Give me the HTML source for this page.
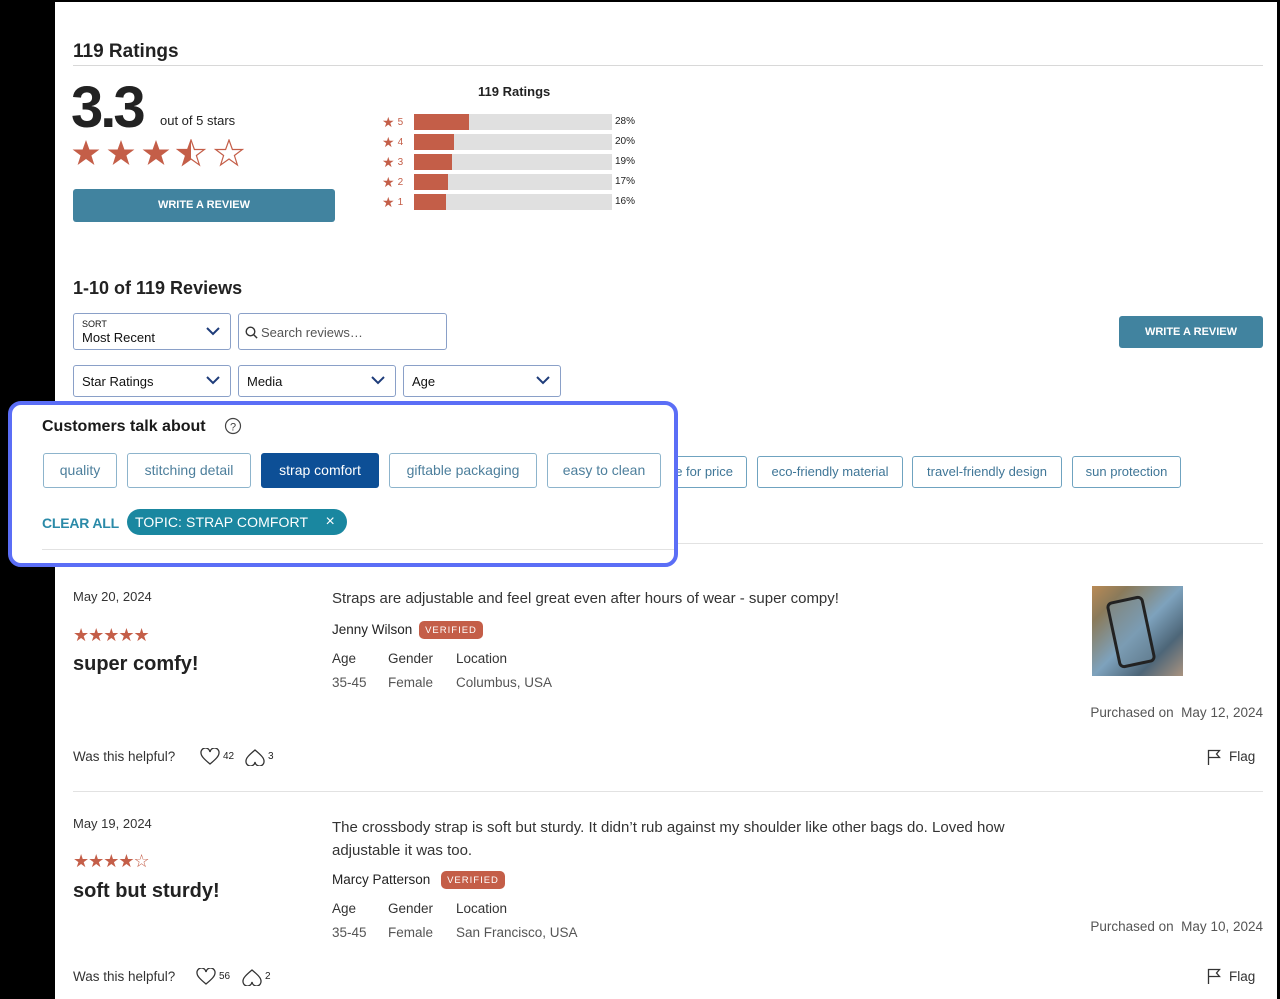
<!DOCTYPE html>
<html><head><meta charset="utf-8"><style>
*{box-sizing:border-box;margin:0;padding:0}
body{width:1280px;height:999px;background:#000;position:relative;overflow:hidden;font-family:"Liberation Sans",Arial,sans-serif;color:#222}
.page{position:absolute;left:55px;top:2px;width:1222px;height:997px;background:#fff}
.a{position:absolute;white-space:nowrap}
.sel{position:absolute;border:1px solid #8aa0c8;border-radius:3px;background:#fff;font-size:13px;color:#111}
.chev{position:absolute;right:10px;top:50%;margin-top:-5px}
.chip{position:absolute;top:456px;height:32px;border:1px solid #6fa3c0;border-radius:3px;color:#3f7697;font-size:13px;line-height:30px;text-align:center;background:#fff}
.chip2{position:absolute;top:453px;height:35px;border:1.5px solid #8db4cc;border-radius:3px;color:#4d7f9c;font-size:14px;line-height:32px;text-align:center;background:#fff}
.btn{position:absolute;background:#41839f;color:#fff;font-weight:bold;font-size:11px;text-align:center;border-radius:3px}
.rv{font-family:"Liberation Sans",sans-serif;color:#333}
.badge{position:absolute;background:#c45e48;color:#fff;font-size:9.5px;letter-spacing:1px;border-radius:5px;height:18px;display:flex;align-items:center;justify-content:center}
.hr{position:absolute;height:1px;background:#e2e2e2}
.hs{position:absolute;left:382px;font-size:14px;color:#c45e48;line-height:14px}
.hs span{font-size:10px;margin-left:3px;vertical-align:2px}
.hp{position:absolute;left:615px;font-size:10px;color:#222}
</style></head><body>
<div class="page"></div>
<div class="a" style="left:73px;top:41px;font-size:19px;font-weight:bold;color:#222">119 Ratings</div>
<div class="hr" style="left:73px;top:65px;width:1190px;background:#d8d8d8"></div>
<div class="a" style="left:71px;top:74px;font-size:58px;font-weight:bold;letter-spacing:-3px;color:#222">3.3</div>
<div class="a" style="left:160px;top:113px;font-size:13px;color:#222">out of 5 stars</div>
<svg class="a" style="left:72px;top:139px" width="175" height="30" viewBox="0 0 175 30">
<defs><path id="s" d="M14 1l3.4 9.5h10l-8 6 3 9.5-8.4-6-8.4 6 3-9.5-8-6h10z"/>
<clipPath id="h"><rect x="0" y="0" width="14" height="30"/></clipPath></defs>
<g fill="#c45e48"><use href="#s"/><use href="#s" x="35"/><use href="#s" x="70"/></g>
<g transform="translate(105,0)"><use href="#s" fill="#c45e48" clip-path="url(#h)"/><use href="#s" fill="none" stroke="#c45e48" stroke-width="1.2"/></g>
<use href="#s" x="143" fill="none" stroke="#c45e48" stroke-width="1.2"/>
</svg>
<div class="btn" style="left:73px;top:189px;width:262px;height:33px;line-height:33px">WRITE A REVIEW</div>
<div class="a" style="left:478px;top:84px;font-size:13px;font-weight:bold">119 Ratings</div>
<div class="a" style="left:73px;top:278px;font-size:18px;font-weight:bold;color:#222">1-10 of 119 Reviews</div>
<div class="sel" style="left:73px;top:313px;width:158px;height:37px"><div class="a" style="left:8px;top:5px;font-size:9px">SORT</div><div class="a" style="left:8px;top:16px">Most Recent</div><svg class="chev" width="14" height="9"><path d="M1 1l6 6 6-6" stroke="#1e3c7a" stroke-width="2" fill="none"/></svg></div>
<div class="sel" style="left:238px;top:313px;width:209px;height:37px"><svg class="a" style="left:6px;top:12px" width="13" height="13"><circle cx="5.5" cy="5.5" r="4.3" stroke="#333" stroke-width="1.4" fill="none"/><path d="M8.6 8.6l3.5 3.5" stroke="#333" stroke-width="1.5"/></svg><div class="a" style="left:22px;top:11px;color:#555">Search reviews…</div></div>
<div class="btn" style="left:1119px;top:316px;width:144px;height:32px;line-height:32px">WRITE A REVIEW</div>
<div class="sel" style="left:73px;top:365px;width:158px;height:32px"><div class="a" style="left:8px;top:8px">Star Ratings</div><svg class="chev" width="14" height="9"><path d="M1 1l6 6 6-6" stroke="#1e3c7a" stroke-width="2" fill="none"/></svg></div>
<div class="sel" style="left:238px;top:365px;width:158px;height:32px"><div class="a" style="left:8px;top:8px">Media</div><svg class="chev" width="14" height="9"><path d="M1 1l6 6 6-6" stroke="#1e3c7a" stroke-width="2" fill="none"/></svg></div>
<div class="sel" style="left:403px;top:365px;width:158px;height:32px"><div class="a" style="left:8px;top:8px">Age</div><svg class="chev" width="14" height="9"><path d="M1 1l6 6 6-6" stroke="#1e3c7a" stroke-width="2" fill="none"/></svg></div>
<div class="chip" style="left:600px;width:147px;text-align:right;padding-right:13px">value for price</div>
<div class="chip" style="left:757px;width:146px">eco-friendly material</div>
<div class="chip" style="left:912px;width:150px">travel-friendly design</div>
<div class="chip" style="left:1072px;width:109px">sun protection</div>
<div class="hr" style="left:677px;top:543px;width:586px"></div>
<!-- overlay -->
<div class="a" style="left:8px;top:401px;width:670px;height:166px;border:4px solid #5b6ef6;border-radius:13px;background:#fff;overflow:hidden">
<div class="a" style="left:30px;top:13px;font-size:16px;font-weight:bold;color:#1a1a1a">Customers talk about</div>
<svg class="a" style="left:212px;top:12px" width="18" height="18"><circle cx="9" cy="9" r="7.5" stroke="#444" stroke-width="1.2" fill="none"/><text x="9" y="13.5" font-size="11" text-anchor="middle" fill="#444" font-family="Liberation Sans">?</text></svg>
<div class="chip2" style="left:31px;top:48px;width:74px">quality</div>
<div class="chip2" style="left:115px;top:48px;width:124px">stitching detail</div>
<div class="chip2" style="left:249px;top:48px;width:118px;background:#0d4f96;border-color:#0d4f96;color:#fff">strap comfort</div>
<div class="chip2" style="left:377px;top:48px;width:148px">giftable packaging</div>
<div class="chip2" style="left:535px;top:48px;width:114px">easy to clean</div>
<div class="a" style="left:30px;top:110px;font-size:14px;color:#2a8aa8;font-weight:bold;letter-spacing:-.2px">CLEAR ALL</div>
<div class="a" style="left:115px;top:104px;width:220px;height:26px;border-radius:13px;background:#1a87a0;color:#fff;font-size:14px;line-height:26px;padding-left:8px;letter-spacing:.1px">TOPIC: STRAP COMFORT<span style="position:absolute;right:12px;font-size:16px">×</span></div>
<div class="hr" style="left:30px;top:144px;width:640px"></div>
</div>
<!-- review 1 -->
<div class="a rv" style="left:73px;top:589px;font-size:13px">May 20, 2024</div>
<div class="a" style="left:73px;top:625px;font-size:18px;color:#c45e48;letter-spacing:-1px">★★★★★</div>
<div class="a" style="left:73px;top:653px;font-size:20px;font-weight:bold;color:#222">super comfy!</div>
<div class="a rv" style="left:332px;top:590px;font-size:15px">Straps are adjustable and feel great even after hours of wear - super compy!</div>
<div class="a rv" style="left:332px;top:622px;font-size:13.5px;color:#222">Jenny Wilson</div>
<div class="badge" style="left:419px;top:621px;width:64px">VERIFIED</div>
<div class="a rv" style="left:332px;top:651px;font-size:13.5px">Age</div>
<div class="a rv" style="left:388px;top:651px;font-size:13.5px">Gender</div>
<div class="a rv" style="left:456px;top:651px;font-size:13.5px">Location</div>
<div class="a rv" style="left:332px;top:675px;font-size:13.5px;color:#555">35-45</div>
<div class="a rv" style="left:388px;top:675px;font-size:13.5px;color:#555">Female</div>
<div class="a rv" style="left:456px;top:675px;font-size:13.5px;color:#555">Columbus, USA</div>
<div class="a" style="left:1092px;top:586px;width:91px;height:90px;overflow:hidden;background:linear-gradient(135deg,#b98a55 0%,#8a7a5a 20%,#7ea2bd 50%,#4d6678 75%,#a99380 100%)"><div class="a" style="left:20px;top:12px;width:38px;height:68px;border:3px solid #222;border-radius:6px;transform:rotate(-12deg);background:rgba(120,150,170,.5)"></div></div>
<div class="a rv" style="right:17px;top:705px;font-size:13.5px;color:#555">Purchased on&nbsp; May 12, 2024</div>
<div class="a rv" style="left:73px;top:749px;font-size:13.5px">Was this helpful?</div>
<svg class="a" style="left:200px;top:748px" width="20" height="18"><path d="M10 16C4 11 1 8 1 5a4 4 0 0 1 9-1 4 4 0 0 1 9 1c0 3-3 6-9 11z" fill="none" stroke="#333" stroke-width="1.3"/></svg>
<div class="a" style="left:223px;top:751px;font-size:10px">42</div>
<svg class="a" style="left:245px;top:748px" width="20" height="18"><path d="M10 2C4 7 1 10 1 13a4 4 0 0 0 9 1 4 4 0 0 0 9-1c0-3-3-6-9-11z" fill="none" stroke="#333" stroke-width="1.3"/></svg>
<div class="a" style="left:268px;top:751px;font-size:10px">3</div>
<svg class="a" style="left:1207px;top:749px" width="14" height="16"><path d="M1.5 16V1.5h11l-3 3.5 3 3.5h-11" fill="none" stroke="#333" stroke-width="1.3"/></svg>
<div class="a rv" style="left:1229px;top:749px;font-size:13.5px">Flag</div>
<div class="hr" style="left:73px;top:791px;width:1190px"></div>
<!-- review 2 -->
<div class="a rv" style="left:73px;top:816px;font-size:13px">May 19, 2024</div>
<div class="a" style="left:73px;top:851px;font-size:18px;color:#c45e48;letter-spacing:-1px">★★★★☆</div>
<div class="a" style="left:73px;top:880px;font-size:20px;font-weight:bold;color:#222">soft but sturdy!</div>
<div class="a rv" style="left:332px;top:816px;font-size:15px;line-height:23px">The crossbody strap is soft but sturdy. It didn’t rub against my shoulder like other bags do. Loved how<br>adjustable it was too.</div>
<div class="a rv" style="left:332px;top:872px;font-size:13.5px;color:#222">Marcy Patterson</div>
<div class="badge" style="left:441px;top:871px;width:64px">VERIFIED</div>
<div class="a rv" style="left:332px;top:901px;font-size:13.5px">Age</div>
<div class="a rv" style="left:388px;top:901px;font-size:13.5px">Gender</div>
<div class="a rv" style="left:456px;top:901px;font-size:13.5px">Location</div>
<div class="a rv" style="left:332px;top:925px;font-size:13.5px;color:#555">35-45</div>
<div class="a rv" style="left:388px;top:925px;font-size:13.5px;color:#555">Female</div>
<div class="a rv" style="left:456px;top:925px;font-size:13.5px;color:#555">San Francisco, USA</div>
<div class="a rv" style="right:17px;top:919px;font-size:13.5px;color:#555">Purchased on&nbsp; May 10, 2024</div>
<div class="a rv" style="left:73px;top:969px;font-size:13.5px">Was this helpful?</div>
<svg class="a" style="left:196px;top:968px" width="20" height="18"><path d="M10 16C4 11 1 8 1 5a4 4 0 0 1 9-1 4 4 0 0 1 9 1c0 3-3 6-9 11z" fill="none" stroke="#333" stroke-width="1.3"/></svg>
<div class="a" style="left:219px;top:971px;font-size:10px">56</div>
<svg class="a" style="left:242px;top:968px" width="20" height="18"><path d="M10 2C4 7 1 10 1 13a4 4 0 0 0 9 1 4 4 0 0 0 9-1c0-3-3-6-9-11z" fill="none" stroke="#333" stroke-width="1.3"/></svg>
<div class="a" style="left:265px;top:971px;font-size:10px">2</div>
<svg class="a" style="left:1207px;top:968px" width="14" height="16"><path d="M1.5 16V1.5h11l-3 3.5 3 3.5h-11" fill="none" stroke="#333" stroke-width="1.3"/></svg>
<div class="a rv" style="left:1229px;top:969px;font-size:13.5px">Flag</div>
<!-- histogram rows -->
<div class="hs" style="top:115px">★<span>5</span></div>
<div class="hs" style="top:135px">★<span>4</span></div>
<div class="hs" style="top:155px">★<span>3</span></div>
<div class="hs" style="top:175px">★<span>2</span></div>
<div class="hs" style="top:195px">★<span>1</span></div>
<div class="a" style="left:414px;top:114px;width:198px;height:16px;background:#e0e0e0"><div style="width:55px;height:16px;background:#c45e48"></div></div>
<div class="a" style="left:414px;top:134px;width:198px;height:16px;background:#e0e0e0"><div style="width:40px;height:16px;background:#c45e48"></div></div>
<div class="a" style="left:414px;top:154px;width:198px;height:16px;background:#e0e0e0"><div style="width:38px;height:16px;background:#c45e48"></div></div>
<div class="a" style="left:414px;top:174px;width:198px;height:16px;background:#e0e0e0"><div style="width:34px;height:16px;background:#c45e48"></div></div>
<div class="a" style="left:414px;top:194px;width:198px;height:16px;background:#e0e0e0"><div style="width:32px;height:16px;background:#c45e48"></div></div>
<div class="hp" style="top:116px">28%</div>
<div class="hp" style="top:136px">20%</div>
<div class="hp" style="top:156px">19%</div>
<div class="hp" style="top:176px">17%</div>
<div class="hp" style="top:196px">16%</div>
</body></html>
